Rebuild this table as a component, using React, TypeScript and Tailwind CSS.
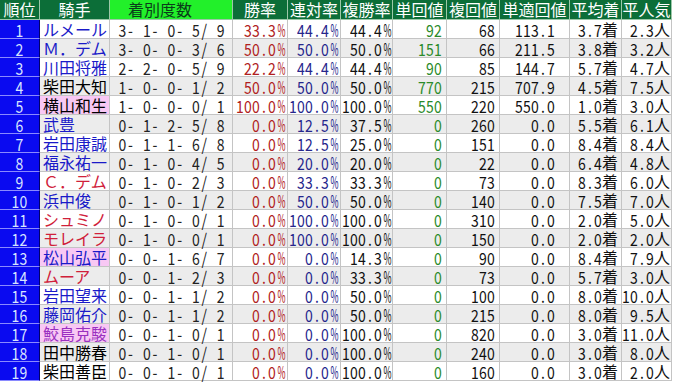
import React from 'react'

// 騎手成績テーブル
type Row = {
    name: string;
    nameColor: string;
    pink?: boolean;
    rec: string;
    win: string;
    ren: string;
    fuku: string;
    tan: string;
    fukuVal: string;
    tekiVal: string;
    avg: string;
    pop: string;
};

const BLUE = "text-[#1a1ac8]";
const RED = "text-[#d0203a]";
const BLACK = "text-black";
const PURPLE = "text-[#9a30c0]";

const rows: Row[] = [
    { name: "ルメール", nameColor: BLUE, rec: " 3- 1- 0- 5/ 9", win: "33.3%", ren: "44.4%", fuku: "44.4%", tan: "92", fukuVal: "68", tekiVal: "113.1", avg: "3.7着", pop: "2.3人" },
    { name: "Ｍ．デム", nameColor: BLUE, rec: " 3- 0- 0- 3/ 6", win: "50.0%", ren: "50.0%", fuku: "50.0%", tan: "151", fukuVal: "66", tekiVal: "211.5", avg: "3.8着", pop: "3.2人" },
    { name: "川田将雅", nameColor: BLUE, rec: " 2- 2- 0- 5/ 9", win: "22.2%", ren: "44.4%", fuku: "44.4%", tan: "90", fukuVal: "85", tekiVal: "144.7", avg: "5.7着", pop: "4.7人" },
    { name: "柴田大知", nameColor: BLACK, rec: " 1- 0- 0- 1/ 2", win: "50.0%", ren: "50.0%", fuku: "50.0%", tan: "770", fukuVal: "215", tekiVal: "707.9", avg: "4.5着", pop: "7.5人" },
    { name: "横山和生", nameColor: BLACK, pink: true, rec: " 1- 0- 0- 0/ 1", win: "100.0%", ren: "100.0%", fuku: "100.0%", tan: "550", fukuVal: "220", tekiVal: "550.0", avg: "1.0着", pop: "3.0人" },
    { name: "武豊", nameColor: BLUE, rec: " 0- 1- 2- 5/ 8", win: "0.0%", ren: "12.5%", fuku: "37.5%", tan: "0", fukuVal: "260", tekiVal: "0.0", avg: "5.5着", pop: "6.1人" },
    { name: "岩田康誠", nameColor: BLUE, rec: " 0- 1- 1- 6/ 8", win: "0.0%", ren: "12.5%", fuku: "25.0%", tan: "0", fukuVal: "151", tekiVal: "0.0", avg: "8.4着", pop: "8.4人" },
    { name: "福永祐一", nameColor: BLUE, rec: " 0- 1- 0- 4/ 5", win: "0.0%", ren: "20.0%", fuku: "20.0%", tan: "0", fukuVal: "22", tekiVal: "0.0", avg: "6.4着", pop: "4.8人" },
    { name: "Ｃ．デム", nameColor: RED, rec: " 0- 1- 0- 2/ 3", win: "0.0%", ren: "33.3%", fuku: "33.3%", tan: "0", fukuVal: "73", tekiVal: "0.0", avg: "8.3着", pop: "6.0人" },
    { name: "浜中俊", nameColor: BLUE, rec: " 0- 1- 0- 1/ 2", win: "0.0%", ren: "50.0%", fuku: "50.0%", tan: "0", fukuVal: "140", tekiVal: "0.0", avg: "7.5着", pop: "7.0人" },
    { name: "シュミノ", nameColor: RED, rec: " 0- 1- 0- 0/ 1", win: "0.0%", ren: "100.0%", fuku: "100.0%", tan: "0", fukuVal: "310", tekiVal: "0.0", avg: "2.0着", pop: "5.0人" },
    { name: "モレイラ", nameColor: RED, rec: " 0- 1- 0- 0/ 1", win: "0.0%", ren: "100.0%", fuku: "100.0%", tan: "0", fukuVal: "150", tekiVal: "0.0", avg: "2.0着", pop: "2.0人" },
    { name: "松山弘平", nameColor: BLUE, pink: true, rec: " 0- 0- 1- 6/ 7", win: "0.0%", ren: "0.0%", fuku: "14.3%", tan: "0", fukuVal: "90", tekiVal: "0.0", avg: "8.4着", pop: "7.9人" },
    { name: "ムーア", nameColor: RED, rec: " 0- 0- 1- 2/ 3", win: "0.0%", ren: "0.0%", fuku: "33.3%", tan: "0", fukuVal: "73", tekiVal: "0.0", avg: "5.7着", pop: "3.0人" },
    { name: "岩田望来", nameColor: BLUE, rec: " 0- 0- 1- 1/ 2", win: "0.0%", ren: "0.0%", fuku: "50.0%", tan: "0", fukuVal: "100", tekiVal: "0.0", avg: "8.0着", pop: "10.0人" },
    { name: "藤岡佑介", nameColor: BLUE, rec: " 0- 0- 1- 1/ 2", win: "0.0%", ren: "0.0%", fuku: "50.0%", tan: "0", fukuVal: "215", tekiVal: "0.0", avg: "8.0着", pop: "9.5人" },
    { name: "鮫島克駿", nameColor: PURPLE, pink: true, rec: " 0- 0- 1- 0/ 1", win: "0.0%", ren: "0.0%", fuku: "100.0%", tan: "0", fukuVal: "820", tekiVal: "0.0", avg: "3.0着", pop: "11.0人" },
    { name: "田中勝春", nameColor: BLACK, rec: " 0- 0- 1- 0/ 1", win: "0.0%", ren: "0.0%", fuku: "100.0%", tan: "0", fukuVal: "240", tekiVal: "0.0", avg: "3.0着", pop: "8.0人" },
    { name: "柴田善臣", nameColor: BLACK, rec: " 0- 0- 1- 0/ 1", win: "0.0%", ren: "0.0%", fuku: "100.0%", tan: "0", fukuVal: "160", tekiVal: "0.0", avg: "3.0着", pop: "2.0人" },
];

const headers = ["騎手", "着別度数", "勝率", "連対率", "複勝率", "単回値", "複回値", "単適回値", "平均着", "平人気"];

const cols = "grid grid-cols-[40px_70px_123px_55px_53px_52px_54px_53px_70px_52px_50px]";

// half-width chars get a fixed 8px cell, like a fixed-pitch gothic font
function Mono({ text, wide }: { text: string; wide?: boolean }) {
    return (
        <>
            {text.split("").map((c, i) => {
                if (c.charCodeAt(0) > 255) {
                    return <span key={i} className="inline-block w-[16px] leading-[16px] text-center">{c}</span>;
                }
                const w = wide ? "w-[8.2px]" : "w-[8px]";
                const glyph = c === "%" ? "text-[14px] scale-x-[0.62] scale-y-[1.2]" : "text-[14px] scale-y-[1.2]";
                return (
                    <span key={i} className={`inline-block ${w} ${glyph} leading-[14px] text-center`}>
                        {c === " " ? "\u00a0" : c}
                    </span>
                );
            })}
        </>
    );
}

export default function App() {
    return (
        <div className="w-[676px] h-[383px] bg-white overflow-hidden text-[16px] font-['Noto_Sans_CJK_JP','Noto_Sans',sans-serif]">
            {/* Header */}
            <div className={`${cols} h-[20px] leading-[19px]`}>
                <div className="bg-[#0c6e38] text-white border-r border-b border-[#9cc8a8] text-center whitespace-nowrap">順位</div>
                {headers.map((h, i) => (
                    <div
                        key={h}
                        className={
                            i === 1
                                ? "bg-[#22f02a] text-[#0b3d1a] border-r border-b border-[#9cc8a8] pl-[18px] whitespace-nowrap"
                                : "bg-[#0c6e38] text-white border-r border-b border-[#9cc8a8] text-center whitespace-nowrap"
                        }
                    >
                        {h}
                    </div>
                ))}
            </div>

            {/* Body */}
            {rows.map((r, idx) => {
                const bg = idx % 2 === 1 ? "bg-[#ececec]" : "bg-white";
                const cell = `${bg} border-r border-b border-[#c4c4c4] whitespace-nowrap`;
                return (
                    <div key={idx} className={`${cols} h-[19px] leading-[18px]`}>
                        <div className="bg-[#0a0af0] text-[#d8e4ff] border-r border-r-[#00006a] border-b border-b-[#8a8aff] text-center">
                            <Mono text={String(idx + 1)} />
                        </div>
                        <div className={`${r.pink ? "bg-[#f8c8f4]" : bg} ${r.nameColor} border-r border-b border-[#c4c4c4] pl-[3px] whitespace-nowrap`}>{r.name}</div>
                        <div className={`${cell} text-[#222]`}><Mono text={r.rec} wide /></div>
                        <div className={`${cell} text-right pr-[3px] text-[#b02020]`}><Mono text={r.win} /></div>
                        <div className={`${cell} text-right pr-[3px] text-[#26268c]`}><Mono text={r.ren} /></div>
                        <div className={`${cell} text-right pr-[2px] text-[#111]`}><Mono text={r.fuku} /></div>
                        <div className={`${cell} text-right pr-[4px] text-[#2a8a2a]`}><Mono text={r.tan} /></div>
                        <div className={`${cell} text-right pr-[4px] text-[#111]`}><Mono text={r.fukuVal} /></div>
                        <div className={`${cell} text-right pr-[14px] text-[#111]`}><Mono text={r.tekiVal} /></div>
                        <div className={`${cell} text-right pr-[3px] text-[#111]`}><Mono text={r.avg} /></div>
                        <div className={`${cell} text-right pr-[1px] text-[#111]`}><Mono text={r.pop} /></div>
                    </div>
                );
            })}
        </div>
    );
}
